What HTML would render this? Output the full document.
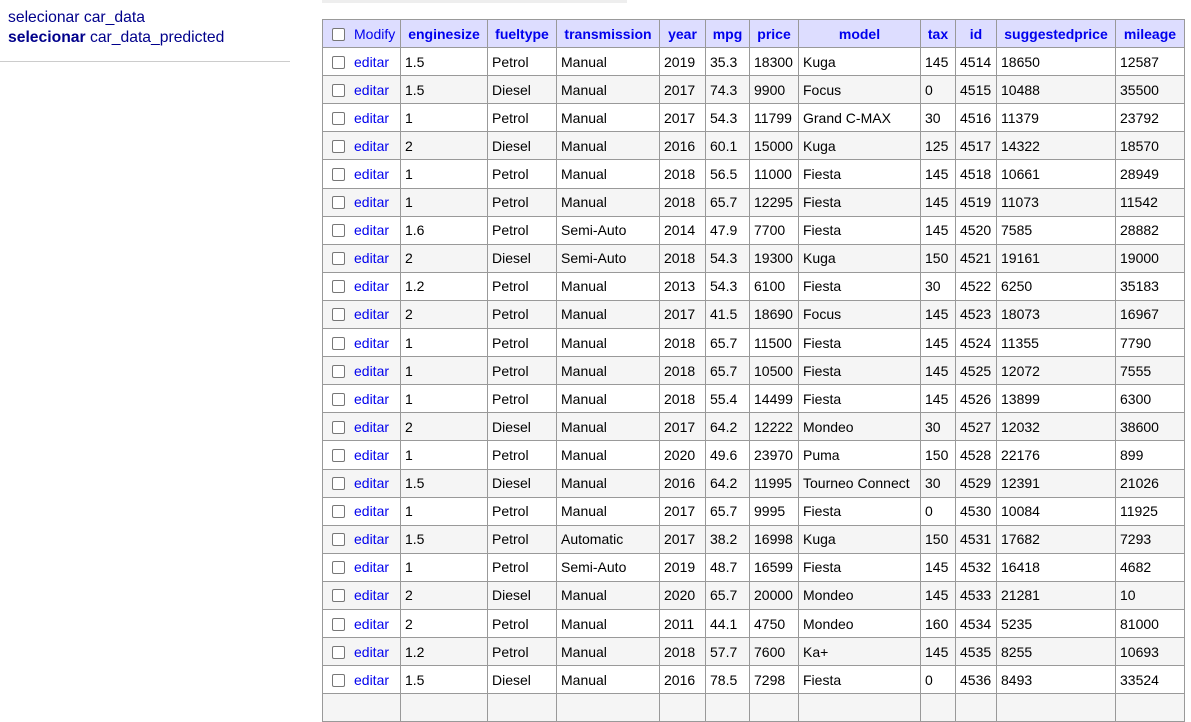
<!DOCTYPE html>
<html><head><meta charset="utf-8"><style>
body{margin:0;background:#fff;font-family:"Liberation Sans",sans-serif;font-size:14px;color:#000;width:1191px;height:698px;overflow:hidden;position:relative}
#menu{position:absolute;left:8px;top:8px;color:#00008b;font-size:15.7px;line-height:20px}
#menu b{color:#00008b}
#hr{position:absolute;left:0;top:61px;width:290px;height:1px;background:#ccc}
#topbar{position:absolute;left:322px;top:0;width:305px;height:3px;background:#eee}
table{position:absolute;left:322px;top:19px;border-collapse:collapse;table-layout:fixed;width:863px}
td,th{border:1px solid #999;padding:0 4px;height:27.1px;white-space:nowrap;overflow:hidden;font-size:14px}
th{background:#ddf;color:#00e;font-weight:bold;text-align:center}
tbody tr:nth-child(even) td{background:#f5f5f5}
.cb{display:inline-block;width:11px;height:11px;border:1px solid #777;border-radius:2px;background:#fff;vertical-align:-2px;margin:0 9px 0 9px}
a{color:#00e;text-decoration:none}
td.f,th.f{padding:0;text-align:left;font-weight:normal}
</style></head><body>
<div id="topbar"></div>
<div id="menu">selecionar car_data<br><b>selecionar</b> car_data_predicted</div>
<div id="hr"></div>
<table>
<colgroup><col style="width:78px"><col style="width:87px"><col style="width:69px"><col style="width:103px"><col style="width:46px"><col style="width:44px"><col style="width:49px"><col style="width:122px"><col style="width:35px"><col style="width:41px"><col style="width:119px"><col style="width:69px"></colgroup>
<thead><tr><th class="f"><span class="cb"></span><a>Modify</a></th><th>enginesize</th><th>fueltype</th><th>transmission</th><th>year</th><th>mpg</th><th>price</th><th>model</th><th>tax</th><th>id</th><th>suggestedprice</th><th>mileage</th></tr></thead>
<tbody>
<tr><td class="f"><span class="cb"></span><a>editar</a></td><td>1.5</td><td>Petrol</td><td>Manual</td><td>2019</td><td>35.3</td><td>18300</td><td>Kuga</td><td>145</td><td>4514</td><td>18650</td><td>12587</td></tr>
<tr><td class="f"><span class="cb"></span><a>editar</a></td><td>1.5</td><td>Diesel</td><td>Manual</td><td>2017</td><td>74.3</td><td>9900</td><td>Focus</td><td>0</td><td>4515</td><td>10488</td><td>35500</td></tr>
<tr><td class="f"><span class="cb"></span><a>editar</a></td><td>1</td><td>Petrol</td><td>Manual</td><td>2017</td><td>54.3</td><td>11799</td><td>Grand C-MAX</td><td>30</td><td>4516</td><td>11379</td><td>23792</td></tr>
<tr><td class="f"><span class="cb"></span><a>editar</a></td><td>2</td><td>Diesel</td><td>Manual</td><td>2016</td><td>60.1</td><td>15000</td><td>Kuga</td><td>125</td><td>4517</td><td>14322</td><td>18570</td></tr>
<tr><td class="f"><span class="cb"></span><a>editar</a></td><td>1</td><td>Petrol</td><td>Manual</td><td>2018</td><td>56.5</td><td>11000</td><td>Fiesta</td><td>145</td><td>4518</td><td>10661</td><td>28949</td></tr>
<tr><td class="f"><span class="cb"></span><a>editar</a></td><td>1</td><td>Petrol</td><td>Manual</td><td>2018</td><td>65.7</td><td>12295</td><td>Fiesta</td><td>145</td><td>4519</td><td>11073</td><td>11542</td></tr>
<tr><td class="f"><span class="cb"></span><a>editar</a></td><td>1.6</td><td>Petrol</td><td>Semi-Auto</td><td>2014</td><td>47.9</td><td>7700</td><td>Fiesta</td><td>145</td><td>4520</td><td>7585</td><td>28882</td></tr>
<tr><td class="f"><span class="cb"></span><a>editar</a></td><td>2</td><td>Diesel</td><td>Semi-Auto</td><td>2018</td><td>54.3</td><td>19300</td><td>Kuga</td><td>150</td><td>4521</td><td>19161</td><td>19000</td></tr>
<tr><td class="f"><span class="cb"></span><a>editar</a></td><td>1.2</td><td>Petrol</td><td>Manual</td><td>2013</td><td>54.3</td><td>6100</td><td>Fiesta</td><td>30</td><td>4522</td><td>6250</td><td>35183</td></tr>
<tr><td class="f"><span class="cb"></span><a>editar</a></td><td>2</td><td>Petrol</td><td>Manual</td><td>2017</td><td>41.5</td><td>18690</td><td>Focus</td><td>145</td><td>4523</td><td>18073</td><td>16967</td></tr>
<tr><td class="f"><span class="cb"></span><a>editar</a></td><td>1</td><td>Petrol</td><td>Manual</td><td>2018</td><td>65.7</td><td>11500</td><td>Fiesta</td><td>145</td><td>4524</td><td>11355</td><td>7790</td></tr>
<tr><td class="f"><span class="cb"></span><a>editar</a></td><td>1</td><td>Petrol</td><td>Manual</td><td>2018</td><td>65.7</td><td>10500</td><td>Fiesta</td><td>145</td><td>4525</td><td>12072</td><td>7555</td></tr>
<tr><td class="f"><span class="cb"></span><a>editar</a></td><td>1</td><td>Petrol</td><td>Manual</td><td>2018</td><td>55.4</td><td>14499</td><td>Fiesta</td><td>145</td><td>4526</td><td>13899</td><td>6300</td></tr>
<tr><td class="f"><span class="cb"></span><a>editar</a></td><td>2</td><td>Diesel</td><td>Manual</td><td>2017</td><td>64.2</td><td>12222</td><td>Mondeo</td><td>30</td><td>4527</td><td>12032</td><td>38600</td></tr>
<tr><td class="f"><span class="cb"></span><a>editar</a></td><td>1</td><td>Petrol</td><td>Manual</td><td>2020</td><td>49.6</td><td>23970</td><td>Puma</td><td>150</td><td>4528</td><td>22176</td><td>899</td></tr>
<tr><td class="f"><span class="cb"></span><a>editar</a></td><td>1.5</td><td>Diesel</td><td>Manual</td><td>2016</td><td>64.2</td><td>11995</td><td>Tourneo Connect</td><td>30</td><td>4529</td><td>12391</td><td>21026</td></tr>
<tr><td class="f"><span class="cb"></span><a>editar</a></td><td>1</td><td>Petrol</td><td>Manual</td><td>2017</td><td>65.7</td><td>9995</td><td>Fiesta</td><td>0</td><td>4530</td><td>10084</td><td>11925</td></tr>
<tr><td class="f"><span class="cb"></span><a>editar</a></td><td>1.5</td><td>Petrol</td><td>Automatic</td><td>2017</td><td>38.2</td><td>16998</td><td>Kuga</td><td>150</td><td>4531</td><td>17682</td><td>7293</td></tr>
<tr><td class="f"><span class="cb"></span><a>editar</a></td><td>1</td><td>Petrol</td><td>Semi-Auto</td><td>2019</td><td>48.7</td><td>16599</td><td>Fiesta</td><td>145</td><td>4532</td><td>16418</td><td>4682</td></tr>
<tr><td class="f"><span class="cb"></span><a>editar</a></td><td>2</td><td>Diesel</td><td>Manual</td><td>2020</td><td>65.7</td><td>20000</td><td>Mondeo</td><td>145</td><td>4533</td><td>21281</td><td>10</td></tr>
<tr><td class="f"><span class="cb"></span><a>editar</a></td><td>2</td><td>Petrol</td><td>Manual</td><td>2011</td><td>44.1</td><td>4750</td><td>Mondeo</td><td>160</td><td>4534</td><td>5235</td><td>81000</td></tr>
<tr><td class="f"><span class="cb"></span><a>editar</a></td><td>1.2</td><td>Petrol</td><td>Manual</td><td>2018</td><td>57.7</td><td>7600</td><td>Ka+</td><td>145</td><td>4535</td><td>8255</td><td>10693</td></tr>
<tr><td class="f"><span class="cb"></span><a>editar</a></td><td>1.5</td><td>Diesel</td><td>Manual</td><td>2016</td><td>78.5</td><td>7298</td><td>Fiesta</td><td>0</td><td>4536</td><td>8493</td><td>33524</td></tr>
<tr><td class="f"></td><td></td><td></td><td></td><td></td><td></td><td></td><td></td><td></td><td></td><td></td><td></td></tr>
</tbody></table>
</body></html>
